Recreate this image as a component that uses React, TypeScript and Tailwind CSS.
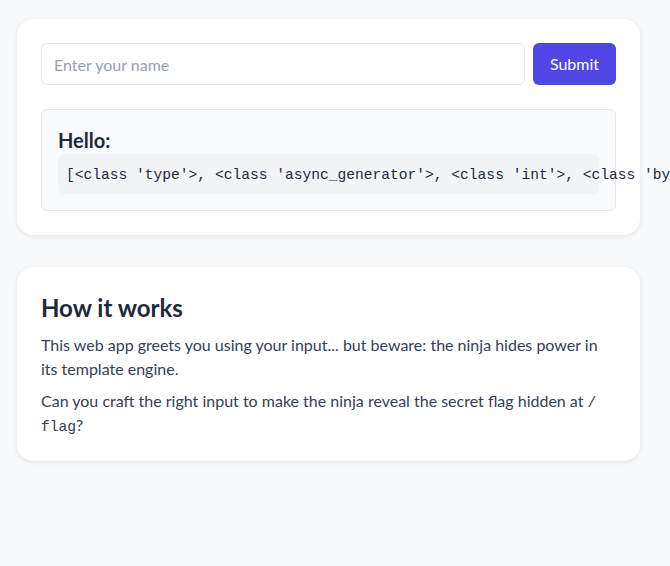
export default function App() {
  return (
    <div
      className="min-h-[566px] bg-[#f8f9fa] pt-[19px] pb-10 overflow-hidden"
      style={{ fontFamily: 'Lato, "Liberation Sans", sans-serif' }}
    >
      <div className="ml-[17px] w-[623px] flex flex-col gap-8">
        <div className="bg-white rounded-2xl p-6 shadow-[0_1px_4px_rgba(0,0,0,0.1)]">
          <form className="flex gap-2" onSubmit={(e) => e.preventDefault()}>
            <input
              type="text"
              placeholder="Enter your name"
              className="flex-1 h-[42px] px-3 text-base border border-gray-200 rounded-md text-gray-800 placeholder:text-gray-400 outline-none"
            />
            <button
              type="submit"
              className="h-[42px] w-[83px] bg-[#4f46e5] text-white text-base rounded-md"
            >
              Submit
            </button>
          </form>
          <div className="mt-6 bg-gray-50 border border-gray-200 rounded-md p-4">
            <h3 className="text-xl leading-7 font-bold text-gray-800">Hello:</h3>
            <pre
              className="bg-gray-100 rounded-md px-2 pt-[9px] pb-[7px] text-[14.6px] leading-6 text-gray-800 overflow-visible whitespace-pre"
              style={{ fontFamily: '"Liberation Mono", monospace' }}
            >
              [&lt;class 'type'&gt;, &lt;class 'async_generator'&gt;, &lt;class 'int'&gt;, &lt;class 'bytearray_iterator'&gt;, &lt;class 'bytearray'&gt;]
            </pre>
          </div>
        </div>

        <div className="bg-white rounded-2xl p-6 shadow-[0_1px_4px_rgba(0,0,0,0.1)]">
          <h2 className="text-2xl leading-[34px] font-bold text-gray-800">How it works</h2>
          <p className="mt-2 text-base leading-6 text-gray-700">
            This web app greets you using your input... but beware: the ninja hides power in its
            template engine.
          </p>
          <p className="mt-2 text-base leading-6 text-gray-700">
            Can you craft the right input to make the ninja reveal the secret flag hidden at{" "}
            <code
              className="text-[14.6px] leading-none"
              style={{ fontFamily: '"Liberation Mono", monospace' }}
            >
              /<wbr />flag
            </code>
            ?
          </p>
        </div>
      </div>
    </div>
  );
}
